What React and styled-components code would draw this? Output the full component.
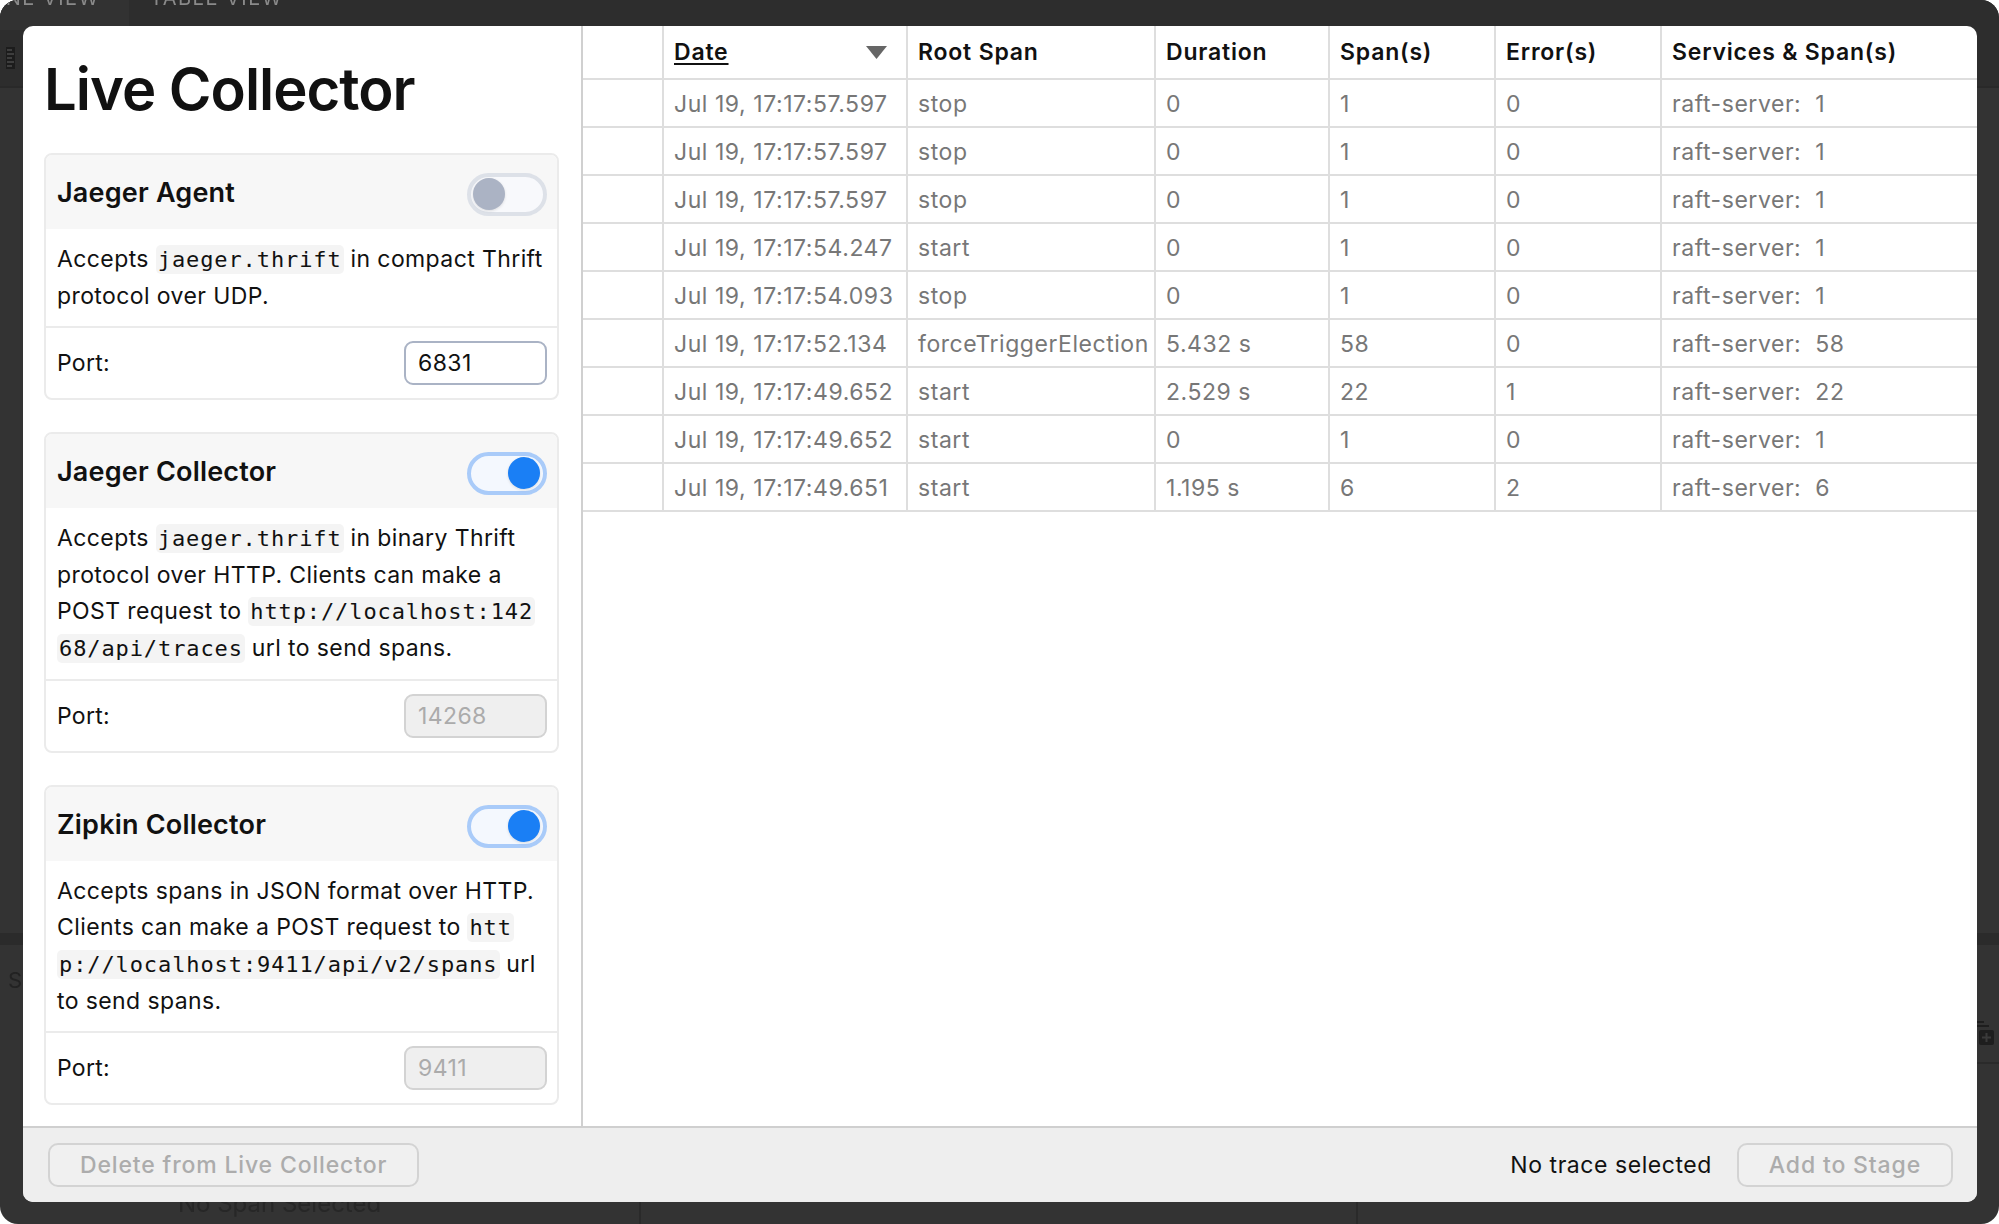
import React from "react";
import styled, { createGlobalStyle } from "styled-components";

const GlobalStyle = createGlobalStyle`
  html, body {
    margin: 0;
    padding: 0;
    background: #ffffff;
  }
  body {
    font-family: Inter, "Noto Sans", sans-serif;
    -webkit-font-smoothing: antialiased;
  }
  * {
    box-sizing: border-box;
  }
`;

// Background app window (dimmed, behind the modal)
const AppWindow = styled.div`
  position: fixed;
  inset: 0;
  background: #333333;
  border-radius: 18px;
  overflow: hidden;
  display: flex;
  flex-direction: column;
`;

const TopBar = styled.div`
  height: 88px;
  background: #2d2d2d;
  border-bottom: 2px solid #292929;
  display: flex;
  flex-direction: column;
`;

const Tabs = styled.div`
  display: flex;
  height: 30px;
`;

const Tab = styled.div`
  width: ${(p) => p.$width}px;
  background: ${(p) => (p.$active ? "#323232" : "transparent")};
  padding-left: ${(p) => p.$indent}px;
  color: #8a8a8a;
  font-size: 20px;
  line-height: 20px;
  letter-spacing: 1.5px;
  white-space: nowrap;
  overflow: hidden;

  span {
    display: block;
    margin-top: -12px;
  }
`;

const ToolRow = styled.div`
  flex: 1;
  display: flex;
  align-items: center;
  padding-left: 6px;
`;

const MainArea = styled.div`
  flex: 1;
`;

const Splitter = styled.div`
  height: 12px;
  background: #2b2b2b;
`;

const BottomPanel = styled.div`
  height: 279px;
  display: flex;
`;

const BottomColumn = styled.div`
  width: ${(p) => p.$width};
  flex: ${(p) => (p.$grow ? 1 : "none")};
  border-right: ${(p) => (p.$last ? "none" : "2px solid #2a2a2a")};
  display: flex;
  flex-direction: column;
`;

const PanelLetter = styled.div`
  padding: 22px 0 0 8px;
  font-size: 22px;
  color: #222;
`;

const PanelEmpty = styled.div`
  margin-top: auto;
  padding: 0 0 6px 178px;
  font-size: 24px;
  color: #272727;
  white-space: nowrap;
`;

const PanelHead = styled.div`
  height: 119px;
  border-bottom: 2px solid #2a2a2a;
  display: flex;
  align-items: flex-end;
  justify-content: flex-end;
  padding: 0 4px 16px 0;
`;

// Modal
const Modal = styled.div`
  position: absolute;
  left: 23px;
  top: 26px;
  width: 1954px;
  height: 1176px;
  background: #ffffff;
  border-radius: 10px;
  overflow: hidden;
  display: flex;
  flex-direction: column;
  color: #111;
`;

const ModalBody = styled.div`
  flex: 1;
  min-height: 0;
  display: flex;
`;

const Sidebar = styled.div`
  width: 560px;
  flex: none;
  border-right: 2px solid #d0d0d0;
  padding: 30px 22px 27px 21px;
  overflow: hidden;
`;

const Title = styled.h1`
  margin: 0 0 30px;
  font-size: 58px;
  line-height: 67px;
  font-weight: 600;
  letter-spacing: -1px;
`;

const Card = styled.section`
  border: 2px solid #ebebeb;
  border-radius: 8px;
  overflow: hidden;

  & + & {
    margin-top: 32px;
  }
`;

const CardHeader = styled.div`
  height: 74px;
  background: #f7f7f7;
  display: flex;
  align-items: center;
  justify-content: space-between;
  padding: 0 10px 0 11px;
`;

const CardTitle = styled.h2`
  margin: 0;
  font-size: 27px;
  font-weight: 600;
  letter-spacing: 0.2px;
`;

const Toggle = styled.div`
  width: 80px;
  height: 43px;
  margin-top: 4px;
  border-radius: 22px;
  border: 4px solid ${(p) => (p.$on ? "#a9cbf9" : "#dde1e8")};
  background: ${(p) => (p.$on ? "#f4f8fe" : "#f8f9fc")};
  display: flex;
  align-items: center;
  justify-content: ${(p) => (p.$on ? "flex-end" : "flex-start")};
  padding: 0 3px 0 2px;
`;

const Thumb = styled.span`
  width: 32px;
  height: 32px;
  border-radius: 50%;
  background: ${(p) => (p.$on ? "#1a7ff5" : "#abb3c4")};
  box-shadow: 0 1px 3px rgba(0, 0, 0, 0.12);
`;

const Description = styled.p`
  margin: 0;
  padding: 12px 11px;
  font-size: 23px;
  line-height: 36px;
  letter-spacing: 0.4px;
  white-space: nowrap;
  border-bottom: 2px solid #ebebeb;
`;

const Code = styled.code`
  font-family: "DejaVu Sans Mono", "Liberation Mono", monospace;
  font-size: 22px;
  letter-spacing: 0.9px;
  background: #f4f4f4;
  border-radius: 5px;
  padding: 2px 2px;
`;

const PortRow = styled.div`
  height: 70px;
  display: flex;
  align-items: center;
  justify-content: space-between;
  padding: 0 10px 0 11px;
  font-size: 23px;
  letter-spacing: 0.3px;
`;

const PortInput = styled.input`
  width: 143px;
  height: 44px;
  border-radius: 9px;
  border: 2px solid ${(p) => (p.disabled ? "#d3d3d3" : "#aab3c5")};
  background: ${(p) => (p.disabled ? "#efefef" : "#ffffff")};
  color: ${(p) => (p.disabled ? "#ababab" : "#111")};
  font-family: Inter, "Noto Sans", sans-serif;
  font-size: 23px;
  letter-spacing: 0.4px;
  padding: 0 12px;
  outline: none;
`;

// Trace table
const TableArea = styled.div`
  flex: 1;
  min-width: 0;
  overflow: hidden;
`;

const COLUMNS = "81px 244px 248px 174px 166px 166px 315px";

const Row = styled.div`
  display: grid;
  grid-template-columns: ${COLUMNS};
  height: ${(p) => (p.$head ? 54 : 48)}px;
`;

const Cell = styled.div`
  display: flex;
  align-items: center;
  justify-content: space-between;
  padding: ${(p) => (p.$head ? "0 19px 0 10px" : "2px 8px 0 10px")};
  border-right: 2px solid #dedede;
  border-bottom: 2px solid #dedede;
  font-size: 23px;
  font-weight: ${(p) => (p.$head ? 600 : 400)};
  letter-spacing: ${(p) => (p.$head ? "0.8px" : "0.55px")};
  color: ${(p) => (p.$head ? "#111" : "#777")};
  white-space: pre;
  overflow: hidden;

  &:last-child {
    border-right: none;
  }
`;

const SortLabel = styled.span`
  text-decoration: underline;
  text-underline-offset: 3px;
  text-decoration-thickness: 2px;
`;

// Footer
const Footer = styled.div`
  height: 76px;
  flex: none;
  background: #eeeeee;
  border-top: 2px solid #cfcfcf;
  display: flex;
  align-items: center;
  gap: 25px;
  padding: 0 24px 0 25px;
`;

const FooterButton = styled.button`
  height: 44px;
  padding: 0 30px;
  border: 2px solid #d3d3d3;
  border-radius: 10px;
  background: #f0f0f0;
  color: #acacac;
  font-family: Inter, "Noto Sans", sans-serif;
  font-size: 23px;
  font-weight: 500;
  letter-spacing: 0.85px;
  margin-right: ${(p) => (p.$push ? "auto" : "0")};
`;

const Status = styled.span`
  font-size: 23px;
  letter-spacing: 0.55px;
  color: #111;
`;

const collectors = [
  {
    name: "Jaeger Agent",
    on: false,
    port: "6831",
    lines: [
      <>
        Accepts <Code>jaeger.thrift</Code> in compact Thrift
      </>,
      "protocol over UDP.",
    ],
  },
  {
    name: "Jaeger Collector",
    on: true,
    port: "14268",
    lines: [
      <>
        Accepts <Code>jaeger.thrift</Code> in binary Thrift
      </>,
      "protocol over HTTP. Clients can make a",
      <>
        POST request to <Code>http://localhost:142</Code>
      </>,
      <>
        <Code>68/api/traces</Code> url to send spans.
      </>,
    ],
  },
  {
    name: "Zipkin Collector",
    on: true,
    port: "9411",
    lines: [
      "Accepts spans in JSON format over HTTP.",
      <>
        Clients can make a POST request to <Code>htt</Code>
      </>,
      <>
        <Code>p://localhost:9411/api/v2/spans</Code> url
      </>,
      "to send spans.",
    ],
  },
];

const traces = [
  ["Jul 19, 17:17:57.597", "stop", "0", "1", "0", "raft-server:  1"],
  ["Jul 19, 17:17:57.597", "stop", "0", "1", "0", "raft-server:  1"],
  ["Jul 19, 17:17:57.597", "stop", "0", "1", "0", "raft-server:  1"],
  ["Jul 19, 17:17:54.247", "start", "0", "1", "0", "raft-server:  1"],
  ["Jul 19, 17:17:54.093", "stop", "0", "1", "0", "raft-server:  1"],
  ["Jul 19, 17:17:52.134", "forceTriggerElection", "5.432 s", "58", "0", "raft-server:  58"],
  ["Jul 19, 17:17:49.652", "start", "2.529 s", "22", "1", "raft-server:  22"],
  ["Jul 19, 17:17:49.652", "start", "0", "1", "0", "raft-server:  1"],
  ["Jul 19, 17:17:49.651", "start", "1.195 s", "6", "2", "raft-server:  6"],
];

const RulerIcon = () => (
  <svg width="9" height="22" viewBox="0 0 9 22">
    <rect x="0" y="0" width="9" height="22" fill="#1c1c1c" />
    <path d="M1 3h5M1 7h7M1 11h5M1 15h7M1 19h5" stroke="#4a4a4a" strokeWidth="1.4" />
  </svg>
);

const StackAddIcon = () => (
  <svg width="20" height="26" viewBox="0 0 20 26">
    <path d="M0 2h9M0 6h14" stroke="#1e1e1e" strokeWidth="2.2" />
    <rect x="4" y="10" width="15" height="15" rx="2" fill="#1e1e1e" />
    <path d="M11.5 13v9M7 17.5h9" stroke="#3a3a3a" strokeWidth="2" />
  </svg>
);

const SortArrow = () => (
  <svg width="21" height="13" viewBox="0 0 21 13">
    <polygon points="0,0 21,0 10.5,13" fill="#666" />
  </svg>
);

const Backdrop = () => (
  <AppWindow>
    <TopBar>
      <Tabs>
        <Tab $width={129} $indent={0} $active>
          <span style={{ marginLeft: -14 }}>LINE VIEW</span>
        </Tab>
        <Tab $width={300} $indent={21}>
          <span>TABLE VIEW</span>
        </Tab>
      </Tabs>
      <ToolRow>
        <RulerIcon />
      </ToolRow>
    </TopBar>
    <MainArea />
    <Splitter />
    <BottomPanel>
      <BottomColumn $width="641px">
        <PanelLetter>S</PanelLetter>
        <PanelEmpty>No Span Selected</PanelEmpty>
      </BottomColumn>
      <BottomColumn $width="717px" />
      <BottomColumn $grow $last>
        <PanelHead>
          <StackAddIcon />
        </PanelHead>
      </BottomColumn>
    </BottomPanel>
  </AppWindow>
);

const CollectorCard = ({ name, on, port, lines }) => (
  <Card>
    <CardHeader>
      <CardTitle>{name}</CardTitle>
      <Toggle $on={on}>
        <Thumb $on={on} />
      </Toggle>
    </CardHeader>
    <Description>
      {lines.map((line, i) => (
        <React.Fragment key={i}>
          {i > 0 && <br />}
          {line}
        </React.Fragment>
      ))}
    </Description>
    <PortRow>
      <span>Port:</span>
      <PortInput value={port} disabled={on} readOnly />
    </PortRow>
  </Card>
);

const App = () => {
  return (
    <>
      <GlobalStyle />
      <Backdrop />
      <Modal>
        <ModalBody>
          <Sidebar>
            <Title>Live Collector</Title>
            {collectors.map((c) => (
              <CollectorCard key={c.name} {...c} />
            ))}
          </Sidebar>
          <TableArea>
            <Row $head>
              <Cell $head />
              <Cell $head>
                <SortLabel>Date</SortLabel>
                <SortArrow />
              </Cell>
              <Cell $head>Root Span</Cell>
              <Cell $head>Duration</Cell>
              <Cell $head>Span(s)</Cell>
              <Cell $head>Error(s)</Cell>
              <Cell $head>Services &amp; Span(s)</Cell>
            </Row>
            {traces.map((t, i) => (
              <Row key={i}>
                <Cell />
                {t.map((value, j) => (
                  <Cell key={j}>{value}</Cell>
                ))}
              </Row>
            ))}
          </TableArea>
        </ModalBody>
        <Footer>
          <FooterButton $push disabled>
            Delete from Live Collector
          </FooterButton>
          <Status>No trace selected</Status>
          <FooterButton disabled>Add to Stage</FooterButton>
        </Footer>
      </Modal>
    </>
  );
};

export default App;
